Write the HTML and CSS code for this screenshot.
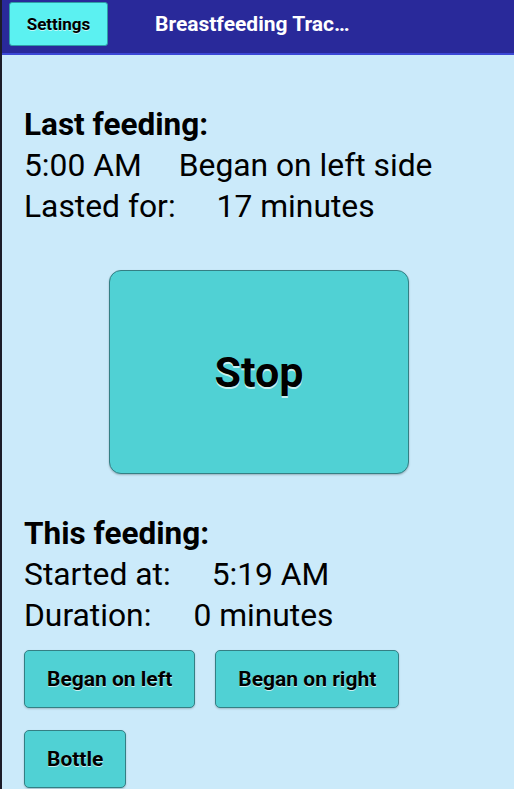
FILE: index.html
```html
<!DOCTYPE html>
<html>
<head>
<meta charset="utf-8">
<link rel="stylesheet" href="styles.css">
</head>
<body>
<div class="app">
  <header class="bar">
    <button class="settings">Settings</button>
    <div class="title">Breastfeeding Trac…</div>
  </header>
  <main class="content">
    <section class="info">
      <div class="heading">Last feeding:</div>
      <div class="row"><span class="gap-a">5:00 AM</span><span>Began on left side</span></div>
      <div class="row"><span>Lasted for:</span><span>17 minutes</span></div>
    </section>
    <div class="stop-wrap">
      <button class="stop">Stop</button>
    </div>
    <section class="info">
      <div class="heading">This feeding:</div>
      <div class="row"><span>Started at:</span><span>5:19 AM</span></div>
      <div class="row"><span class="gap-b">Duration:</span><span>0 minutes</span></div>
    </section>
    <div class="actions">
      <button class="act">Began on left</button>
      <button class="act">Began on right</button>
      <button class="act">Bottle</button>
    </div>
  </main>
</div>
</body>
</html>
```
FILE: styles.css
```css
html, body {
  margin: 0;
  padding: 0;
  height: 100%;
  overflow: hidden;
}
body {
  background: #1c1c28;
  font-family: Roboto, "Noto Sans", sans-serif;
  color: #000;
}
.app {
  margin-left: 2px;
  height: 789px;
  background: #cbeafa;
  display: flex;
  flex-direction: column;
}
.bar {
  height: 53px;
  background: #29299a;
  border-bottom: 2px solid #3b48d6;
  display: flex;
  align-items: flex-start;
  flex-shrink: 0;
}
.settings {
  margin: 2px 0 0 7px;
  width: 99px;
  height: 44px;
  background: #5bf1f1;
  border: 1px solid #2e9ea6;
  border-radius: 3px;
  font-family: inherit;
  font-weight: bold;
  font-size: 17px;
  color: #000;
  text-shadow: 0 1px 0 rgba(255,255,255,0.6);
  padding: 0;
}
.title {
  margin: 12px 0 0 47px;
  color: #fff;
  font-weight: bold;
  font-size: 21px;
  line-height: 25px;
}
.content {
  padding: 49px 0 0 22px;
  display: flex;
  flex-direction: column;
}
.heading {
  font-weight: bold;
  font-size: 31.5px;
  line-height: 41px;
}
.row {
  display: flex;
  gap: 41px;
  font-size: 31.8px;
  line-height: 41px;
}
.row .gap-a {
  margin-right: -4px;
}
.row .gap-b {
  margin-right: 1px;
}
.stop-wrap {
  display: flex;
  padding: 43px 0 39px 85px;
}
.stop {
  width: 300px;
  height: 204px;
  background: #50d1d4;
  border: 1px solid #347f84;
  border-radius: 12px;
  font-family: inherit;
  font-weight: bold;
  font-size: 43px;
  color: #000;
  text-shadow: 0 2px 0 rgba(255,255,255,0.7);
  box-shadow: 0 1px 2px rgba(0,0,0,0.25);
  padding: 0;
}
.actions {
  display: flex;
  flex-wrap: wrap;
  gap: 22px 20px;
  padding-top: 14px;
  width: 400px;
}
.act {
  height: 58px;
  padding: 0 22px;
  background: #50d1d4;
  border: 1px solid #347f84;
  border-radius: 5px;
  font-family: inherit;
  font-weight: bold;
  font-size: 21px;
  color: #000;
  text-shadow: 0 1px 0 rgba(255,255,255,0.7);
  box-shadow: 0 1px 2px rgba(0,0,0,0.2);
}
```
